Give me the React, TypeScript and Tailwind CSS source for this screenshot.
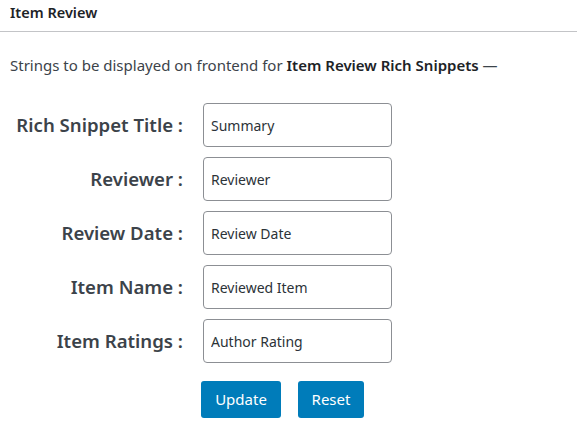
const fields = [
  { label: 'Rich Snippet Title :', value: 'Summary' },
  { label: 'Reviewer :', value: 'Reviewer' },
  { label: 'Review Date :', value: 'Review Date' },
  { label: 'Item Name :', value: 'Reviewed Item' },
  { label: 'Item Ratings :', value: 'Author Rating' },
];

export default function App() {
  return (
    <div
      className="w-[577px] h-[436px] bg-white text-[#1d2327] overflow-hidden"
      style={{ fontFamily: '"Noto Sans", "Open Sans", sans-serif' }}
    >
      {/* Titre de la section */}
      <div className="h-[32px] border-b border-[#c3c4c7] px-[10px] pt-[2px]">
        <h2 className="text-[14.5px] font-semibold leading-[20px]">Item Review</h2>
      </div>

      <p className="px-[10px] mt-[22px] text-[15px] leading-[22px] text-[#3c434a]">
        Strings to be displayed on frontend for{' '}
        <strong className="font-semibold text-[#1d2327]">Item Review Rich Snippets</strong> —
      </p>

      <div className="mt-[27px] grid grid-cols-[183px_189px] gap-x-5 gap-y-[10px]">
        {fields.map((f) => (
          <div key={f.label} className="contents">
            <label className="flex items-center justify-end h-[44px] text-[18.6px] font-semibold text-[#3c434a] whitespace-nowrap">
              {f.label}
            </label>
            <input
              defaultValue={f.value}
              className="h-[44px] w-[189px] rounded-[4px] border border-[#8c8f94] px-[7px] text-[14px] text-[#2c3338] outline-none"
            />
          </div>
        ))}
      </div>

      <div className="mt-[18px] ml-[201px] flex gap-[17px]">
        <button className="h-[37px] w-[80px] rounded-[3px] bg-[#007cba] text-white text-[15px]">
          Update
        </button>
        <button className="h-[37px] w-[66px] rounded-[3px] bg-[#007cba] text-white text-[15px]">
          Reset
        </button>
      </div>
    </div>
  );
}
